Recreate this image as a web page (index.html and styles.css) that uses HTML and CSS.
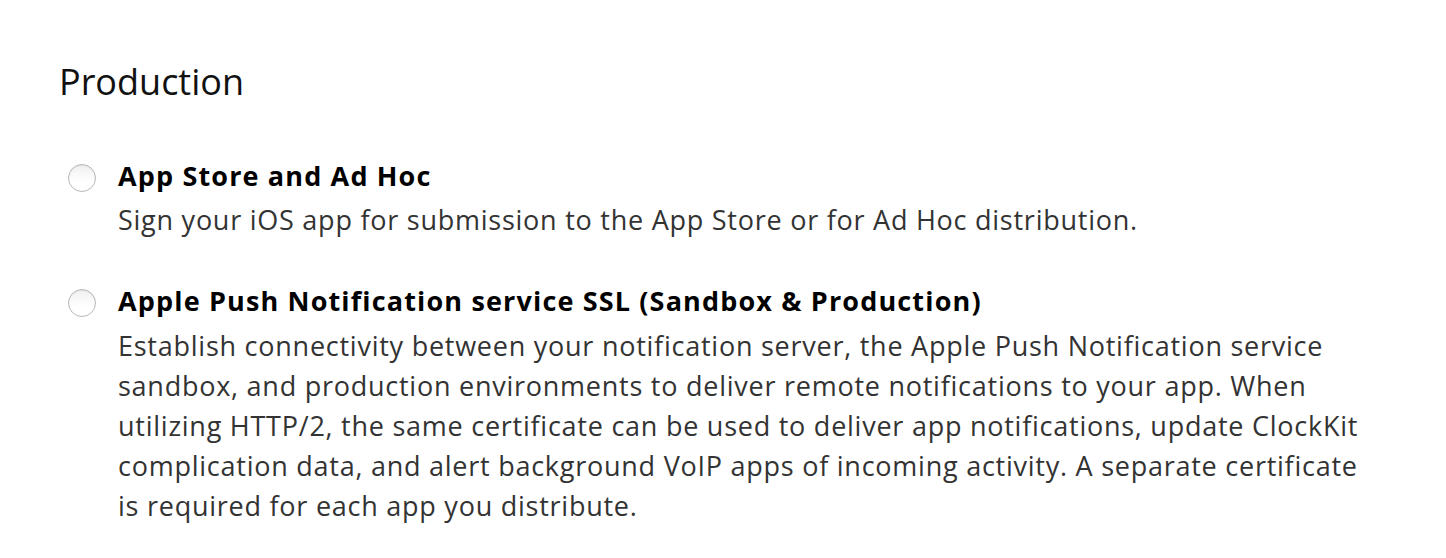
FILE: index.html
```html
<!DOCTYPE html>
<html>
<head>
<meta charset="utf-8">
<link rel="stylesheet" href="styles.css">
</head>
<body>
<section class="panel">
  <h2 class="heading">Production</h2>
  <div class="options">
    <label class="option">
      <span class="radio"></span>
      <span class="option-body">
        <span class="option-title">App Store and Ad Hoc</span>
        <span class="option-desc">Sign your iOS app for submission to the App Store or for Ad Hoc distribution.</span>
      </span>
    </label>
    <label class="option">
      <span class="radio"></span>
      <span class="option-body">
        <span class="option-title">Apple Push Notification service SSL (Sandbox &amp; Production)</span>
        <span class="option-desc option-desc-long">Establish connectivity between your notification server, the Apple Push Notification service sandbox, and production environments to deliver remote notifications to your app. When utilizing HTTP/2, the same certificate can be used to deliver app notifications, update ClockKit complication data, and alert background VoIP apps of incoming activity. A separate certificate is required for each app you distribute.</span>
      </span>
    </label>
  </div>
</section>
</body>
</html>
```
FILE: styles.css
```css
html, body {
  margin: 0;
  padding: 0;
  background: #fff;
}
body {
  font-family: "Open Sans", "Liberation Sans", sans-serif;
  color: #000;
}
.panel {
  padding: 58px 0 0 59px;
}
.heading {
  margin: 0;
  font-size: 36px;
  font-weight: 400;
  line-height: 48px;
  color: #111;
}
.options {
  display: flex;
  flex-direction: column;
  gap: 41px;
  margin-top: 50px;
}
.option {
  display: flex;
  gap: 22px;
  padding-left: 9px;
}
.radio {
  flex: none;
  width: 26px;
  height: 26px;
  border-radius: 50%;
  border: 1px solid #b8b8b8;
  background: linear-gradient(#f0f0f0, #fff 65%);
  box-shadow: inset 0 1px 1px rgba(0,0,0,0.06);
  margin-top: 8px;
}
.option-body {
  display: flex;
  flex-direction: column;
  width: 1268px;
}
.option-title {
  font-size: 27px;
  font-weight: 700;
  line-height: 40px;
  letter-spacing: 1.15px;
  color: #000;
}
.option-desc {
  margin-top: 4px;
  font-size: 27px;
  line-height: 40px;
  letter-spacing: 0.75px;
  color: #333;
}
.option-desc-long {
  margin-top: 5px;
}
```
